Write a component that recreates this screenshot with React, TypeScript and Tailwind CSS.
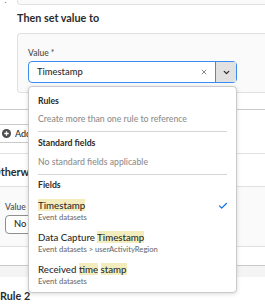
import { X, ChevronDown, Check } from "lucide-react";

const font = { fontFamily: "Lato, 'Noto Sans', sans-serif" };

function Hl({ children }: { children: React.ReactNode }) {
  return <span className="bg-[#f3ecbc]">{children}</span>;
}

function Item({
  title,
  sub,
  checked,
}: {
  title: React.ReactNode;
  sub: string;
  checked?: boolean;
}) {
  return (
    <div className="flex h-[32px] items-center justify-between pl-[9px] pr-[8px]">
      <div className="flex flex-col">
        <span className="text-[9.7px] font-medium leading-[13px] text-[#2c2c2c]">{title}</span>
        <span className="text-[7.6px] font-medium leading-[10px] text-[#6e6e6e]">{sub}</span>
      </div>
      {checked && <Check className="-mt-[8px] h-[10px] w-[10px] text-[#1473e6]" strokeWidth={3} />}
    </div>
  );
}

export default function App() {
  return (
    <div className="relative h-[306px] w-[265px] overflow-hidden bg-white" style={font}>
      {/* carte précédente, coupée */}
      <div className="flex h-[5px]">
        <div className="w-[17px] overflow-hidden pl-[1px] text-[9px] leading-[5px] text-[#6e6e6e]">⋮</div>
        <div className="flex-1 rounded-bl-[4px] border-b border-l border-[#e1e1e1] bg-[#fafafa]" />
      </div>

      <div className="pl-[17px] pt-[5px] text-[10.8px] font-bold leading-[16px] text-[#2c2c2c]">
        Then set value to
      </div>

      <div className="ml-[17px] mt-[7px] h-[60px] rounded-l-[4px] border border-r-0 border-[#e1e1e1] bg-[#fafafa] pl-[10px] pt-[12px]">
        <div className="text-[8.5px] font-medium leading-[14px] text-[#4b4b4b]">Value *</div>
        <div className="mt-[1px] flex h-[22px] w-[209px] rounded-[4px] border border-[#378ef0] bg-white">
          <div className="flex flex-1 items-center justify-between pl-[8px] pr-[7px]">
            <span className="text-[9.4px] font-medium text-[#2c2c2c]">Timestamp</span>
            <X className="h-[8px] w-[8px] text-[#6e6e6e]" strokeWidth={2.5} />
          </div>
          <div className="flex w-[21px] items-center justify-center border-l border-[#378ef0] bg-[#e1e1e1]">
            <ChevronDown className="h-[9px] w-[9px] text-[#2c2c2c]" strokeWidth={3.5} />
          </div>
        </div>
      </div>

      <div className="mt-[16px] h-[44px] border-t border-[#cacaca] pt-[14px]">
        <div className="-ml-[10px] flex h-[19px] w-[60px] items-center gap-[4px] rounded-[4px] border border-[#cacaca] pl-[11px]">
          <svg viewBox="0 0 10 10" className="h-[9px] w-[9px]">
            <circle cx="5" cy="5" r="5" fill="#4b4b4b" />
            <path d="M5 2.5v5M2.5 5h5" stroke="#fff" strokeWidth="1.4" />
          </svg>
          <span className="text-[9px] font-medium text-[#2c2c2c]">Add</span>
        </div>
      </div>

      <div className="h-[33px] border-t border-[#e1e1e1] pt-[10px]">
        <div className="-ml-[8px] text-[10.8px] font-bold leading-[16px] text-[#2c2c2c]">Otherwise</div>
      </div>

      <div className="h-[61px] border-y border-[#e1e1e1] bg-[#fafafa] pl-[5px] pt-[13px]">
        <div className="text-[8.5px] font-medium leading-[14px] text-[#4b4b4b]">Value *</div>
        <div className="mt-[1px] flex h-[19px] w-[60px] items-center rounded-[4px] border border-[#8e8e8e] bg-white pl-[8px]">
          <span className="text-[9.4px] font-medium text-[#2c2c2c]">No value</span>
        </div>
      </div>

      <div className="mt-[18px] h-[12px] border-t border-[#cacaca] bg-[#f4f4f4]" />

      <div className="pt-[11px] text-[10.8px] font-bold leading-[16px] text-[#2c2c2c]">Rule 2</div>

      {/* menu déroulant */}
      <div className="absolute left-[28px] top-[86px] h-[207px] w-[209px] rounded-[4px] border border-[#cacaca] bg-white pt-[5px] shadow-[0_1px_4px_rgba(0,0,0,0.15)]">
        <div className="flex h-[18px] items-center pl-[9px] text-[8.7px] font-bold text-[#2c2c2c]">Rules</div>
        <div className="flex h-[18px] items-center pl-[9px] text-[8.7px] font-medium text-[#8e8e8e]">
          Create more than one rule to reference
        </div>
        <div className="mx-[9px] mt-[3px] border-t border-[#d5d5d5]" />
        <div className="flex h-[22px] items-center pl-[9px] text-[8.7px] font-bold text-[#2c2c2c]">Standard fields</div>
        <div className="flex h-[16px] items-center pl-[9px] text-[8.7px] font-medium text-[#8e8e8e]">
          No standard fields applicable
        </div>
        <div className="mx-[9px] mt-[4px] border-t border-[#d5d5d5]" />
        <div className="flex h-[19px] items-center pl-[9px] text-[8.7px] font-bold text-[#2c2c2c]">Fields</div>
        <Item title={<Hl>Timestamp</Hl>} sub="Event datasets" checked />
        <Item
          title={
            <>
              Data Capture <Hl>Timestamp</Hl>
            </>
          }
          sub="Event datasets > userActivityRegion"
        />
        <Item
          title={
            <>
              Received <Hl>time</Hl> <Hl>stamp</Hl>
            </>
          }
          sub="Event datasets"
        />
      </div>
    </div>
  );
}
